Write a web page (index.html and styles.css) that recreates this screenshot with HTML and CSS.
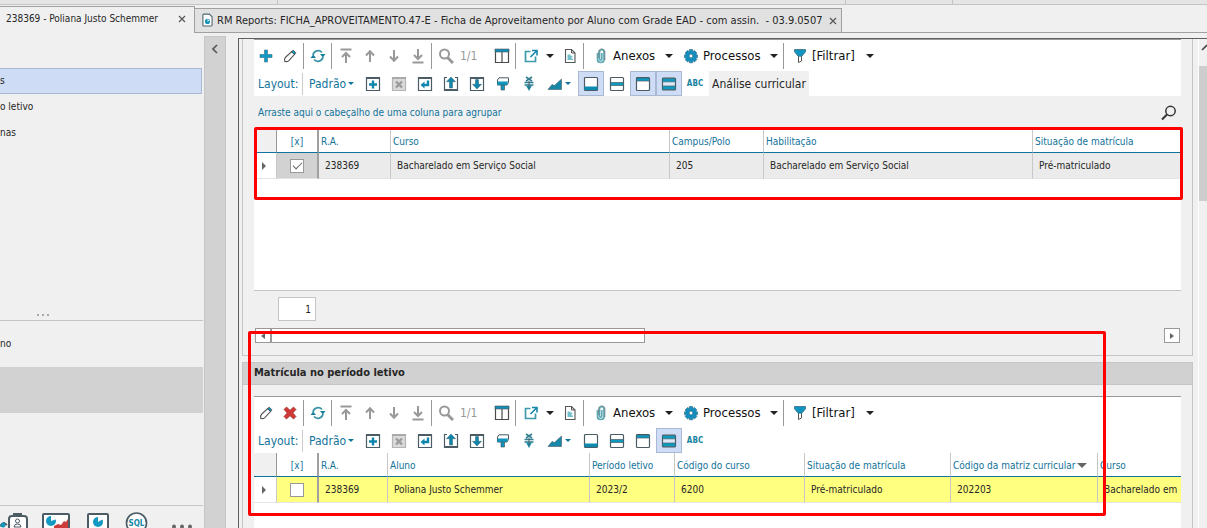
FILE: index.html
```html
<!DOCTYPE html>
<html lang="pt-BR">
<head>
<meta charset="utf-8">
<title>RM - Ficha do aluno</title>
<link rel="stylesheet" href="styles.css">
</head>
<body>
<svg class="defs" aria-hidden="true">
  <symbol id="i-plus" viewBox="0 0 16 16"><path d="M6.500 2h3v4.500H14v3H9.500V14h-3V9.500H2v-3h4.500z" fill="#0f9ac4" stroke="#3f7c93" stroke-width=".7"/></symbol>
  <symbol id="i-pencil" viewBox="0 0 16 16"><path d="M2.800 13.500c-.6-1.800 0-3.500 1-4.500l6-5.500 2.800 2.800-5.500 6c-1 1-2.600 1.600-4.300 1.200z" fill="#fff" stroke="#555" stroke-width="1.100"/><path d="M9.500 3.500l1.800-1.300 2.600 2.600-1.400 1.800z" fill="#0f9ac4" stroke="#444" stroke-width=".8"/></symbol>
  <symbol id="i-delete" viewBox="0 0 16 16"><path d="M2 4.500L4.500 2 8 5.300 11.500 2 14 4.500 10.800 8l3.200 3.500-2.500 2.500L8 10.700 4.500 14 2 11.500 5.200 8z" fill="#cf3a36" stroke="#9c2b2b" stroke-width=".7"/></symbol>
  <symbol id="i-refresh" viewBox="0 0 16 16"><g fill="none" stroke="#3b93a5" stroke-width="1.700"><path d="M3 7a5.200 5.200 0 0 1 9-2.500M13 9a5.200 5.200 0 0 1-9 2.500"/></g><path d="M10 6h5.500l-2.700 3.400zM.5 10H6L3.200 6.600z" fill="#16809c"/></symbol>
  <symbol id="i-up" viewBox="0 0 16 16"><path d="M8 14V4M4 7.500L8 3.200l4 4.300" fill="none" stroke="#999" stroke-width="2"/></symbol>
  <symbol id="i-down" viewBox="0 0 16 16"><path d="M8 2v10M4 8.500l4 4.300 4-4.300" fill="none" stroke="#999" stroke-width="2"/></symbol>
  <symbol id="i-first" viewBox="0 0 16 16"><path d="M2.500 1.500h11M8 15V6M4 9l4-4 4 4" fill="none" stroke="#999" stroke-width="2"/></symbol>
  <symbol id="i-last" viewBox="0 0 16 16"><path d="M2.500 14.500h11M8 1v9M4 7l4 4 4-4" fill="none" stroke="#999" stroke-width="2"/></symbol>
  <symbol id="i-search" viewBox="0 0 16 16"><circle cx="6.500" cy="6" r="4.500" fill="none" stroke="#999" stroke-width="2"/><path d="M9.500 9.500L15 15" stroke="#999" stroke-width="3"/></symbol>
  <symbol id="i-columns" viewBox="0 0 16 16"><path d="M1.500 1.500h13v13h-13zM8 3v11" fill="#fff" stroke="#4a4a4a" stroke-width="1.200"/><path d="M1 1h14v3H1z" fill="#0f8fb8" stroke="#555" stroke-width=".6"/></symbol>
  <symbol id="i-export" viewBox="0 0 16 16"><path d="M7.500 3.500h-5v10h10v-5" fill="none" stroke="#3c9aab" stroke-width="1.700"/><path d="M9 2.500h5v5M13.500 3L7.500 9" fill="none" stroke="#1687aa" stroke-width="1.600"/></symbol>
  <symbol id="i-doc" viewBox="0 0 16 16"><path d="M3.500 1.500h6l3.500 3.500v9.500H3.500z" fill="#fff" stroke="#555" stroke-width="1.100"/><path d="M9.500 1.500V5H13" fill="none" stroke="#555"/><path d="M5.500 6.500H8.500v1.300h2V9h-1v1.500h1.500V12h-5.500z" fill="#73bfc9"/></symbol>
  <symbol id="i-clip" viewBox="0 0 16 16"><path d="M4.500 5v6.500c0 4 6.500 4 6.500 0V4c0-3-4.500-3-4.500 0v7c0 1.500 2.300 1.500 2.300 0V5" fill="none" stroke="#5fa9b4" stroke-width="1.700"/><path d="M5.700 10V3.800c0-3.800 6.200-3.800 6.200 0V12" fill="none" stroke="#5c6b6f" stroke-width=".7"/></symbol>
  <symbol id="i-gear" viewBox="0 0 16 16"><path d="M6.300 1.500h3.400v2.200l1.800-1.200 2.400 2.500-1.400 1.700 2 .1v3h-2l1.400 1.700-2.400 2.400-1.800-1.300v2.200H6.300v-2.200l-1.800 1.300-2.400-2.400 1.400-1.700h-2v-3l2-.1L2.100 5l2.400-2.500 1.800 1.200z" fill="#0f8fc0" stroke="#33697f" stroke-width=".6"/><circle cx="8" cy="8" r="1.900" fill="#fff" stroke="#33697f" stroke-width=".7"/></symbol>
  <symbol id="i-funnel" viewBox="0 0 16 16"><path d="M6.500 8v6.500L9.500 13V8" fill="#fff" stroke="#555"/><path d="M2.500 1.500h11v2.300L9.800 8.200H6.200L2.500 3.800z" fill="#0f95c2" stroke="#43758a" stroke-width=".9"/></symbol>
  <symbol id="i-box-plus" viewBox="0 0 16 16"><path d="M1.500 1.800h13v12.700h-13z" fill="#fff" stroke="#4b5c64" stroke-width="1.200"/><path d="M1 2h14" stroke="#4b5c64" stroke-width="2"/><path d="M8 4.500v8M4 8.500h8" stroke="#0f86ab" stroke-width="2.400"/></symbol>
  <symbol id="i-box-x" viewBox="0 0 16 16"><path d="M1.500 1.800h13v12.700h-13z" fill="#dadada" stroke="#b5b5b5" stroke-width="1.200"/><path d="M1 2h14" stroke="#aaa" stroke-width="2"/><path d="M5 5.500l6 6M11 5.500l-6 6" stroke="#9b9b9b" stroke-width="2.400"/></symbol>
  <symbol id="i-box-back" viewBox="0 0 16 16"><path d="M1.500 1.800h13v12.700h-13z" fill="#fff" stroke="#4b5c64" stroke-width="1.200"/><path d="M1 2h14" stroke="#4b5c64" stroke-width="2"/><path d="M11 4.500V9H6" fill="none" stroke="#0f86ab" stroke-width="2.400"/><path d="M7.500 5.500v7L3.500 9z" fill="#0f86ab"/></symbol>
  <symbol id="i-box-up" viewBox="0 0 16 16"><path d="M4 1.500H1.500v13h13v-13H12" fill="#fff" stroke="#4b5c64" stroke-width="1.200"/><path d="M1 14h14" stroke="#4b5c64" stroke-width="2"/><path d="M8 1l4.500 4.700H9.500V12h-3V5.700h-3z" fill="#0f86ab" stroke="#35606f" stroke-width=".5"/></symbol>
  <symbol id="i-box-down" viewBox="0 0 16 16"><path d="M1.500 1.800h13v12.700h-13z" fill="#fff" stroke="#4b5c64" stroke-width="1.200"/><path d="M1 2h14" stroke="#4b5c64" stroke-width="2"/><path d="M8 13L3.500 8.300h3V3.500h3v4.800h3z" fill="#0f86ab" stroke="#35606f" stroke-width=".5"/></symbol>
  <symbol id="i-roller" viewBox="0 0 16 16"><path d="M4 1.800h9.500v4.700L12 9H2.500V4z" fill="#fff" stroke="#4b5c64"/><path d="M2.500 5.500h10.500L12 9H2.500z" fill="#0f95bd"/><path d="M6 9h3.500v5H6z" fill="#0f95bd" stroke="#4b5c64" stroke-width=".7"/></symbol>
  <symbol id="i-split" viewBox="0 0 16 16"><path d="M5 1l6 4M11 1L5 5M3.500 6.500h9M3.500 9h9" stroke="#337e91" stroke-width="1.600"/><path d="M5 9.500h6L8 15z" fill="#1890ad"/><path d="M8 5v8" stroke="#47636c"/></symbol>
  <symbol id="i-chart" viewBox="0 0 16 16"><path d="M1 13.500L5 8.500l2.500 1L14.500 3v10.500z" fill="#1787a8" stroke="#4b5c64" stroke-width=".6"/></symbol>
  <symbol id="i-row-bottom" viewBox="0 0 16 16"><rect x="1.500" y="1.500" width="13" height="13" rx="1" fill="#fff" stroke="#4b5c64" stroke-width="1.200"/><path d="M1.500 10.500h13v3.500h-13z" fill="#0b8bb0"/></symbol>
  <symbol id="i-row-middle" viewBox="0 0 16 16"><rect x="1.500" y="1.500" width="13" height="13" rx="1" fill="#fff" stroke="#4b5c64" stroke-width="1.200"/><path d="M1.500 6.500h13v3h-13z" fill="#0b9ac0" stroke="#4b5c64" stroke-width=".7"/></symbol>
  <symbol id="i-row-top" viewBox="0 0 16 16"><rect x="1.500" y="1.500" width="13" height="13" rx="1" fill="#fff" stroke="#4b5c64" stroke-width="1.200"/><path d="M1.500 2h13v3h-13z" fill="#0b9ac0" stroke="#4b5c64" stroke-width=".7"/></symbol>
  <symbol id="i-row-both" viewBox="0 0 16 16"><rect x="1.500" y="2" width="13" height="12" rx="1" fill="#dfe8f7" stroke="#4b5c64" stroke-width="1.200"/><path d="M1.500 2.500h13v3.300h-13zM1.500 10h13v3.500h-13z" fill="#0b9ac0" stroke="#4b5c64" stroke-width=".7"/></symbol>
</svg>

<div class="app">
  <div class="ribbon"><span></span><span></span><span></span></div>
  <nav class="tabs">
    <div class="tab tab-active"><span>238369 - Poliana Justo Schemmer</span><button class="close" aria-label="Fechar"><svg viewBox="0 0 8 8"><path d="M1 1l6 6M7 1L1 7" stroke="#555" stroke-width="1.200"/></svg></button></div>
    <div class="tab"><svg class="tab-icon" viewBox="0 0 12 16"><path d="M1 2q0-1 1-1h6l3 3v9q0 1-1 1H2q-1 0-1-1z" fill="#fff" stroke="#4c6670" stroke-width="1.200"/><circle cx="6" cy="9" r="2.800" fill="#1695bb"/><path d="M6 9V6.500L8.500 8z" fill="#fff"/></svg><span>RM Reports: FICHA_APROVEITAMENTO.47-E - Ficha de Aproveitamento por Aluno com Grade EAD - com assin.&nbsp; - 03.9.0507</span><button class="close" aria-label="Fechar"><svg viewBox="0 0 8 8"><path d="M1 1l6 6M7 1L1 7" stroke="#555" stroke-width="1.200"/></svg></button></div>
    <div class="tab-rest"></div>
  </nav>

  <div class="shell">
    <aside class="sidebar">
      <ul class="menu">
        <li><a class="current" href="#">s</a></li>
        <li><a href="#">o letivo</a></li>
        <li><a href="#">nas</a></li>
      </ul>
      <div class="grip"><i></i><i></i><i></i></div>
      <a class="section" href="#">no</a>
      <div class="section-selected"></div>
      <div class="dock">
        <svg class="dock-icons" viewBox="0 0 203 22">
          <path d="M0 20l4-3 3 2" fill="none" stroke="#4b5c64" stroke-width="2"/><circle cx="3" cy="19" r="2.500" fill="#1695bb"/>
          <path d="M9 30V13q0-3 3-3h12q3 0 3 3v17" fill="#fff" stroke="#4b5c64" stroke-width="2"/><path d="M13 7h9v4h-9z" fill="#4b5c64"/>
          <g fill="none" stroke="#4b5c64"><circle cx="17.500" cy="15" r="2"/><path d="M14 21q0-3 3.500-3t3.500 3z"/></g>
          <path d="M43 30V9q0-1 1-1h24q1 0 1 1v21" fill="#fff" stroke="#4b5c64" stroke-width="2"/>
          <circle cx="51" cy="15" r="5" fill="#1499c2"/><path d="M51 15V9l6 4z" fill="#fff"/><path d="M54 22v-2l4-2 3 1 3-4 2 1 2-3v9z" fill="#cb3b3b"/>
          <path d="M88 30V9q0-1 1-1h18q1 0 1 1v21" fill="#fff" stroke="#4b5c64" stroke-width="2"/><circle cx="98" cy="16" r="5" fill="#1499c2"/><path d="M98 16v-6l5 3z" fill="#fff"/>
          <circle cx="136.500" cy="17" r="10" fill="#fff" stroke="#4b5c64" stroke-width="1.700"/><text x="136.500" y="20" class="sql">SQL</text>
          <g fill="#666"><circle cx="174" cy="20.500" r="2"/><circle cx="182" cy="20.500" r="2"/><circle cx="190" cy="20.500" r="2"/></g>
        </svg>
      </div>
    </aside>
    <button class="collapser" aria-label="Recolher menu"><svg viewBox="0 0 6 10"><path d="M5 1L1 5l4 4" fill="none" stroke="#555" stroke-width="1.600"/></svg></button>

    <main class="work">
      <div class="content">
        <section class="group">
          <div class="panel">
            <div class="bar bar-main">
              <button class="tool" aria-label="Incluir"><svg><use href="#i-plus"/></svg></button>
              <button class="tool" aria-label="Editar"><svg><use href="#i-pencil"/></svg></button>
              <i class="sep"></i>
              <button class="tool" aria-label="Atualizar"><svg><use href="#i-refresh"/></svg></button>
              <i class="sep"></i>
              <button class="tool" aria-label="Primeiro"><svg><use href="#i-first"/></svg></button>
              <button class="tool" aria-label="Anterior"><svg><use href="#i-up"/></svg></button>
              <button class="tool" aria-label="Próximo"><svg><use href="#i-down"/></svg></button>
              <button class="tool" aria-label="Último"><svg><use href="#i-last"/></svg></button>
              <i class="sep"></i>
              <button class="tool" aria-label="Procurar"><svg><use href="#i-search"/></svg></button>
              <span class="counter">1/1</span>
              <button class="tool" aria-label="Colunas"><svg><use href="#i-columns"/></svg></button>
              <i class="sep"></i>
              <button class="tool drop" aria-label="Exportar"><svg><use href="#i-export"/></svg><b class="caret"></b></button>
              <button class="tool" aria-label="Relatório"><svg><use href="#i-doc"/></svg></button>
              <i class="sep"></i>
              <button class="menu-btn attach"><svg><use href="#i-clip"/></svg>Anexos<b class="caret"></b></button>
              <button class="menu-btn process"><svg><use href="#i-gear"/></svg>Processos<b class="caret"></b></button>
              <i class="sep"></i>
              <button class="menu-btn filter"><svg><use href="#i-funnel"/></svg>[Filtrar]<b class="caret"></b></button>
            </div>
            <div class="bar bar-layout">
              <span class="layout-label">Layout:</span>
              <button class="layout-name">Padrão<b class="caret small"></b></button>
              <button class="lt" aria-label="Novo layout"><svg><use href="#i-box-plus"/></svg></button>
              <button class="lt" aria-label="Excluir layout" disabled><svg><use href="#i-box-x"/></svg></button>
              <button class="lt" aria-label="Restaurar layout"><svg><use href="#i-box-back"/></svg></button>
              <button class="lt" aria-label="Exportar layout"><svg><use href="#i-box-up"/></svg></button>
              <button class="lt" aria-label="Importar layout"><svg><use href="#i-box-down"/></svg></button>
              <button class="lt" aria-label="Formatar"><svg><use href="#i-roller"/></svg></button>
              <button class="lt" aria-label="Dividir"><svg><use href="#i-split"/></svg></button>
              <button class="lt lt-drop" aria-label="Gráfico"><svg><use href="#i-chart"/></svg><b class="caret small"></b></button>
              <button class="lt on" aria-label="Rodapé"><svg><use href="#i-row-bottom"/></svg></button>
              <button class="lt" aria-label="Linha central"><svg><use href="#i-row-middle"/></svg></button>
              <button class="lt on" aria-label="Agrupamento"><svg><use href="#i-row-top"/></svg></button>
              <button class="lt on" aria-label="Linhas alternadas"><svg><use href="#i-row-both"/></svg></button>
              <button class="lt abc">ABC</button>
              <button class="analysis">Análise curricular</button>
            </div>
            <div class="group-by"><span>Arraste aqui o cabeçalho de uma coluna para agrupar</span>
              <button class="find" aria-label="Localizar"><svg viewBox="0 0 16 16"><circle cx="9.500" cy="6" r="4.700" fill="none" stroke="#333" stroke-width="1.500"/><path d="M6 9.500L1 14.500" stroke="#333" stroke-width="2"/></svg></button></div>
            <div class="grid grid-tall">
              <table>
                <colgroup><col class="w22"><col class="w42"><col class="w72"><col class="w279"><col class="w94"><col class="w269"><col></colgroup>
                <thead><tr><th></th><th class="mark">[x]</th><th>R.A.</th><th>Curso</th><th>Campus/Polo</th><th>Habilitação</th><th>Situação de matrícula</th></tr></thead>
                <tbody><tr class="plain"><td><b class="pointer"></b></td><td class="mark"><input type="checkbox" aria-label="Selecionar 238369" checked></td><td>238369</td><td>Bacharelado em Serviço Social</td><td>205</td><td>Bacharelado em Serviço Social</td><td>Pré-matriculado</td></tr></tbody>
              </table>
            </div>
          </div>
          <div class="pager"><input type="text" value="1" aria-label="Quantidade de registros"></div>
          <div class="hscroll"><button aria-label="Rolar à esquerda"><b class="tri left"></b></button><div class="thumb"></div><button aria-label="Rolar à direita"><b class="tri"></b></button></div>
        </section>

        <section class="group second">
          <h2>Matrícula no período letivo</h2>
          <div class="panel">
            <div class="bar bar-main">
              <button class="tool" aria-label="Editar"><svg><use href="#i-pencil"/></svg></button>
              <button class="tool" aria-label="Excluir"><svg><use href="#i-delete"/></svg></button>
              <i class="sep"></i>
              <button class="tool" aria-label="Atualizar"><svg><use href="#i-refresh"/></svg></button>
              <i class="sep"></i>
              <button class="tool" aria-label="Primeiro"><svg><use href="#i-first"/></svg></button>
              <button class="tool" aria-label="Anterior"><svg><use href="#i-up"/></svg></button>
              <button class="tool" aria-label="Próximo"><svg><use href="#i-down"/></svg></button>
              <button class="tool" aria-label="Último"><svg><use href="#i-last"/></svg></button>
              <i class="sep"></i>
              <button class="tool" aria-label="Procurar"><svg><use href="#i-search"/></svg></button>
              <span class="counter">1/1</span>
              <button class="tool" aria-label="Colunas"><svg><use href="#i-columns"/></svg></button>
              <i class="sep"></i>
              <button class="tool drop" aria-label="Exportar"><svg><use href="#i-export"/></svg><b class="caret"></b></button>
              <button class="tool" aria-label="Relatório"><svg><use href="#i-doc"/></svg></button>
              <i class="sep"></i>
              <button class="menu-btn attach"><svg><use href="#i-clip"/></svg>Anexos<b class="caret"></b></button>
              <button class="menu-btn process"><svg><use href="#i-gear"/></svg>Processos<b class="caret"></b></button>
              <i class="sep"></i>
              <button class="menu-btn filter"><svg><use href="#i-funnel"/></svg>[Filtrar]<b class="caret"></b></button>
            </div>
            <div class="bar bar-layout">
              <span class="layout-label">Layout:</span>
              <button class="layout-name">Padrão<b class="caret small"></b></button>
              <button class="lt" aria-label="Novo layout"><svg><use href="#i-box-plus"/></svg></button>
              <button class="lt" aria-label="Excluir layout" disabled><svg><use href="#i-box-x"/></svg></button>
              <button class="lt" aria-label="Restaurar layout"><svg><use href="#i-box-back"/></svg></button>
              <button class="lt" aria-label="Exportar layout"><svg><use href="#i-box-up"/></svg></button>
              <button class="lt" aria-label="Importar layout"><svg><use href="#i-box-down"/></svg></button>
              <button class="lt" aria-label="Formatar"><svg><use href="#i-roller"/></svg></button>
              <button class="lt" aria-label="Dividir"><svg><use href="#i-split"/></svg></button>
              <button class="lt lt-drop" aria-label="Gráfico"><svg><use href="#i-chart"/></svg><b class="caret small"></b></button>
              <button class="lt" aria-label="Rodapé"><svg><use href="#i-row-bottom"/></svg></button>
              <button class="lt" aria-label="Linha central"><svg><use href="#i-row-middle"/></svg></button>
              <button class="lt" aria-label="Agrupamento"><svg><use href="#i-row-top"/></svg></button>
              <button class="lt on" aria-label="Linhas alternadas"><svg><use href="#i-row-both"/></svg></button>
              <button class="lt abc">ABC</button>
            </div>
            <div class="grid">
              <table>
                <colgroup><col class="w22"><col class="w42"><col class="w69"><col class="w202"><col class="w85"><col class="w130"><col class="w146"><col class="w147"><col></colgroup>
                <thead><tr><th></th><th class="mark">[x]</th><th>R.A.</th><th>Aluno</th><th>Período letivo</th><th>Código do curso</th><th>Situação de matrícula</th><th class="sorted"><span>Código da matriz curricular<b class="caret sort"></b></span></th><th>Curso</th></tr></thead>
                <tbody><tr class="yellow"><td><b class="pointer"></b></td><td class="mark"><input type="checkbox" aria-label="Selecionar 238369"></td><td>238369</td><td>Poliana Justo Schemmer</td><td>2023/2</td><td>6200</td><td>Pré-matriculado</td><td>202203</td><td>Bacharelado em</td></tr></tbody>
              </table>
            </div>
          </div>
        </section>
        <div class="note note-first"></div>
        <div class="note note-second"></div>
      </div>
      <div class="vscroll"><svg viewBox="0 0 8 8"><path d="M3 6l5-5" stroke="#444" stroke-width="1.600"/></svg><div class="vthumb"></div></div>
    </main>
  </div>
</div>
</body>
</html>
```
FILE: styles.css
```css
* { box-sizing: border-box; }
body { margin: 0; background: #f0f0f0; color: #262626; font: 10px/14px "DejaVu Sans Condensed", "DejaVu Sans", sans-serif; }
button, input { font: inherit; color: inherit; margin: 0; padding: 0; border: 0; background: none; }
a { color: inherit; text-decoration: none; }
.defs { display: none; }
.app { height: 100vh; display: flex; flex-direction: column; overflow: hidden; }

.ribbon { flex: none; height: 5px; display: flex; background: #e5e5e5; border-bottom: 1px solid #c3c3c3; }
.ribbon span { border-right: 1px solid #c3c3c3; width: 278px; }
.ribbon span:nth-child(2) { width: 568px; }
.ribbon span:nth-child(3) { width: 107px; }

.tabs { flex: none; display: flex; align-items: flex-end; height: 28px; }
.tab { display: flex; align-items: center; height: 25px; padding: 0 4px 0 7px; background: #e1e1e1; border: 1px solid #a0a0a0; border-left: 0; font-size: 11px; white-space: nowrap; }
.tab-active { height: 27px; min-width: 195px; padding: 0 8px 2px 6px; background: #f0f0f0; border-bottom: 0; justify-content: space-between; font-size: 10px; }
.tab-icon { width: 11px; height: 15px; margin-right: 4px; }
.tab-rest { flex: 1; align-self: stretch; border-bottom: 1px solid #a0a0a0; }
.close { width: 8px; height: 8px; margin-left: 6px; display: flex; }

.shell { flex: 1; display: flex; min-height: 0; }
.sidebar { flex: none; width: 203px; padding-top: 35px; display: flex; flex-direction: column; }
.menu { list-style: none; margin: 0; padding: 0; height: 246px; }
.menu a { display: flex; align-items: center; width: 202px; height: 26px; }
.menu .current { background: #cedcf6; border: 1px solid #a9b8d3; border-left: 0; }
.grip { display: flex; gap: 3px; padding-left: 37px; height: 7px; border-bottom: 1px solid #c6c6c6; }
.grip i { width: 2px; height: 2px; background: #aaa; }
.section { padding: 16px 0; height: 46px; }
.section-selected { height: 46px; background: #d2d2d2; }
.dock { margin-top: auto; border-top: 1px solid #c6c6c6; height: 23px; overflow: hidden; }
.dock-icons { display: block; width: 203px; height: 22px; }
.sql { font-size: 8px; font-weight: bold; fill: #1587a5; text-anchor: middle; }
.collapser { flex: none; width: 22px; margin: 3px 0 0 1px; background: #d2d2d2; border: 1px solid #c5c5c5; border-bottom: 0; display: flex; justify-content: center; padding-top: 7px; align-items: flex-start; }
.collapser svg { width: 6px; height: 10px; }

.work { flex: 1; min-width: 0; margin: 5px 0 0 12px; border: solid #606060; border-width: 1px 0 0 1px; display: flex; overflow: hidden; }
.content { flex: 1; min-width: 0; position: relative; padding-left: 3px; }
.group { border: 1px solid #c5c5c5; border-top: 0; padding: 0 11px 12px; }
.second { border-top: 1px solid #c5c5c5; margin-top: 6px; padding-bottom: 40px; }
.second h2 { margin: 0 -11px 11px; padding: 3px 11px; height: 22px; font-size: 11px; line-height: 14px; background: #d1d1d1; border-bottom: 1px solid #c5c5c5; }
.second .panel { min-height: 160px; }
.panel { background: #fff; border-top: 1px solid #999; }
.bar { display: flex; align-items: center; white-space: nowrap; overflow: hidden; }
.bar svg { flex: none; width: 16px; height: 16px; }
.bar-main { height: 31px; padding: 3px 0 2px; color: #111; font-size: 13px; }
.bar-layout { height: 25px; font-size: 12px; }
.tool { flex: none; width: 24px; height: 26px; display: flex; align-items: center; justify-content: center; }
.drop { width: 40px; gap: 7px; }
.sep { flex: none; width: 4px; height: 26px; border-left: 1px solid #999; margin-left: 1px; margin-right: -1px; }
.counter { width: 32px; color: #999; padding-left: 2px; font-size: 12px; }
.caret { flex: none; width: 0; height: 0; border: 4px solid transparent; border-top-color: #222; border-bottom: 0; }
.caret.small { border-width: 3px 3px 0; border-top-color: #12739a; margin-left: 2px; }
.caret.sort { border-width: 5px 5px 0; border-top-color: #666; margin-left: 2px; }
.menu-btn { flex: none; display: flex; align-items: center; }
.menu-btn svg { margin-right: 4px; }
.menu-btn .caret { margin-left: auto; }
.attach { width: 80px; margin-left: 7px; }
.process { width: 95px; margin: 0 4px 0 10px; }
.filter { width: 82px; margin-left: 6px; }
.layout-label { width: 49px; height: 22px; padding: 4px 0 0 4px; color: #12739a; border-right: 1px solid #ccc; }
.layout-name { display: flex; align-items: center; width: 57px; padding-left: 6px; color: #12739a; }
.lt { flex: none; width: 26px; height: 25px; display: flex; align-items: center; justify-content: center; border: 1px solid transparent; }
.lt-drop { width: 36px; margin-left: -1px; margin-right: 1px; }
.lt.on { background: #cedcf6; border-color: #a9b8d3; }
.abc { color: #16839f; font-size: 8px; font-weight: bold; }
.analysis { flex: none; width: 100px; height: 25px; margin-left: 1px; background: #f0f0f0; }

.group-by { height: 33px; background: #f0f0f0; display: flex; align-items: center; justify-content: space-between; padding: 0 4px; color: #12739a; }
.find { width: 16px; height: 16px; display: flex; }
.grid { overflow: hidden; }
.grid-tall { height: 162px; border-bottom: 1px solid #c5c5c5; }
table { width: 100%; table-layout: fixed; border-collapse: separate; border-spacing: 0; }
th, td { padding: 0 0 0 6px; text-align: left; white-space: nowrap; overflow: hidden; border-right: 1px solid #c8c8c8; }
th { height: 24px; padding: 2px 0 0 2px; color: #12739a; font-weight: normal; border-bottom: 1px solid #12739a; }
td { height: 26px; border-bottom: 1px solid #e4e4e4; }
th:first-child { background: #f0f0f0; border-right-color: #999; }
th:last-child, td:last-child { border-right: 0; }
td:first-child { background: #fff; padding-left: 8px; }
.mark { text-align: center; padding-left: 0; border-right: 2px solid #a0a0a0; }
.sorted { overflow: visible; }
.sorted span { display: flex; align-items: center; }
.plain { background: #ebebeb; }
.plain .mark { background: #d2d2d2; }
.yellow { background: #ffff80; }
.w22 { width: 23px; } .w42 { width: 42px; } .w72 { width: 72px; } .w279 { width: 279px; } .w94 { width: 94px; } .w269 { width: 269px; }
.w69 { width: 69px; } .w202 { width: 202px; } .w85 { width: 85px; } .w130 { width: 130px; } .w146 { width: 146px; } .w147 { width: 147px; }
.pointer { display: block; width: 0; border: 4px solid transparent; border-left-color: #666; border-right: 0; }
input[type="checkbox"] { appearance: none; display: inline-grid; place-items: center; width: 14px; height: 14px; background: #fff; border: 1px solid #999; vertical-align: middle; }
input[type="checkbox"]:checked::after { content: ""; width: 8px; height: 4px; border: solid #666; border-width: 0 0 1px 1px; rotate: -45deg; translate: 0 -1px; }

.pager { padding: 6px 24px 7px; display: flex; }
.pager input { width: 38px; height: 24px; padding-right: 4px; text-align: right; background: #fff; border: 1px solid #c5c5c5; }
.hscroll { display: flex; height: 15px; padding: 0 1px; }
.hscroll button { flex: none; width: 16px; background: #fff; border: 1px solid #999; display: flex; align-items: center; justify-content: center; }
.thumb { width: 374px; margin-right: auto; background: #fff; border: 1px solid #999; }
.tri { border: 3px solid transparent; border-left: 4px solid #666; border-right: 0; }
.tri.left { border-left: 0; border-right: 4px solid #666; }

.note { position: absolute; border: 3px solid #f00; border-radius: 2px; pointer-events: none; }
.note-first { left: 15px; right: 10px; top: 88px; height: 73px; }
.note-second { left: 9px; right: 87px; top: 292px; height: 185px; }

.vscroll { flex: none; width: 9px; margin-left: 5px; border-left: 1px solid #fff; padding-top: 5px; }
.vscroll svg { display: block; width: 8px; height: 8px; margin-bottom: 14px; }
.vthumb { height: 135px; background: #cdcdcd; }
```
